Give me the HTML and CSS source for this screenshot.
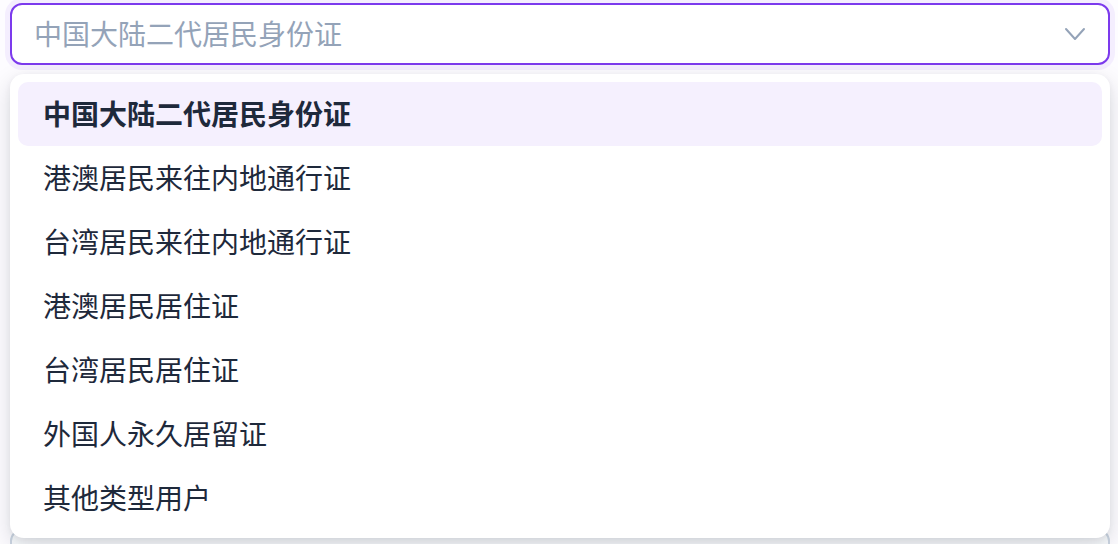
FILE: index.html
```html
<!DOCTYPE html>
<html lang="zh-CN">
<head>
<meta charset="utf-8">
<link rel="stylesheet" href="styles.css">
</head>
<body>
<div class="form">
  <div class="field">
    <div class="select is-open">
      <span class="placeholder">中国大陆二代居民身份证</span>
      <svg class="chevron" width="22" height="14" viewBox="0 0 22 14"><path d="M2 2 L11 12 L20 2" fill="none" stroke="#94a3b8" stroke-width="2" stroke-linecap="round" stroke-linejoin="round"/></svg>
    </div>
    <ul class="menu">
      <li class="option is-selected">中国大陆二代居民身份证</li>
      <li class="option">港澳居民来往内地通行证</li>
      <li class="option">台湾居民来往内地通行证</li>
      <li class="option">港澳居民居住证</li>
      <li class="option">台湾居民居住证</li>
      <li class="option">外国人永久居留证</li>
      <li class="option">其他类型用户</li>
    </ul>
  </div>
  <div class="field">
    <div class="select next"></div>
  </div>
</div>
</body>
</html>
```
FILE: styles.css
```css
* { box-sizing: border-box; }
html, body { margin: 0; padding: 0; background: #fdfcff; }
body {
  font-family: "Noto Sans CJK SC", "Noto Sans", sans-serif;
  width: 1118px;
  height: 544px;
  overflow: hidden;
}
.form {
  height: 544px;
  overflow: hidden;
  padding: 3px 8px 0 10px;
  display: flex;
  flex-direction: column;
  gap: 464px;
}
.field { position: relative; flex-shrink: 0; }
.select {
  height: 62px;
  width: 1100px;
  border: 2px solid #cbd5e1;
  border-radius: 12px;
  background: #fff;
  display: flex;
  align-items: center;
  justify-content: space-between;
  padding: 0 22px 2px 22px;
}
.select.is-open {
  border-color: #7c3aed;
  box-shadow: 0 0 0 5px rgba(124, 58, 237, 0.07);
}
.placeholder {
  color: #94a3b8;
  font-size: 28px;
  line-height: 1;
}
.chevron { display: block; margin-top: 2px; }
.menu {
  position: absolute;
  z-index: 10;
  top: 71px;
  left: 0;
  width: 1100px;
  margin: 0;
  padding: 8px;
  list-style: none;
  background: #fff;
  border-radius: 14px;
  box-shadow: 0 8px 24px rgba(15, 23, 42, 0.14), 0 2px 6px rgba(15, 23, 42, 0.06);
}
.option {
  height: 64px;
  display: flex;
  align-items: center;
  padding: 0 0 3px 25px;
  font-size: 28px;
  color: #1e293b;
  border-radius: 10px;
}
.option.is-selected {
  background: #f5f0fe;
  font-weight: 700;
}
.select.next { background: #f8fafc; }
```
